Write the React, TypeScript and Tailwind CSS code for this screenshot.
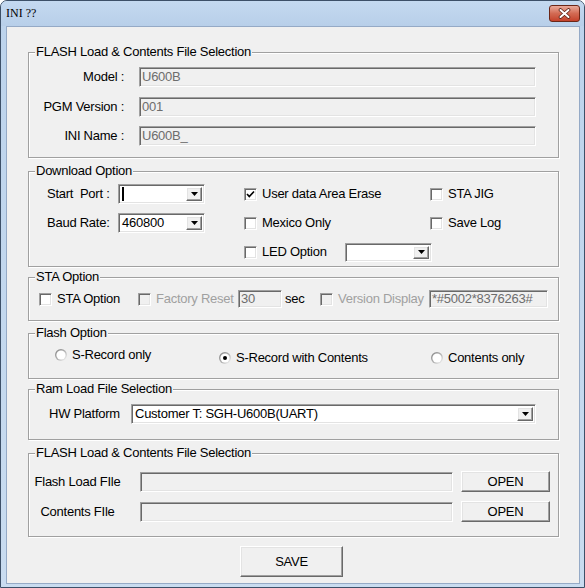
import React from 'react';

const sunken =
  'border border-t-[#a0a0a0] border-l-[#a0a0a0] border-b-white border-r-white shadow-[inset_1px_1px_0_#696969,inset_-1px_-1px_0_#e3e3e3]';
const raised =
  'border border-t-white border-l-white border-b-[#696969] border-r-[#696969] shadow-[inset_-1px_-1px_0_#a0a0a0,inset_1px_1px_0_#e3e3e3]';

const Group: React.FC<{ title: string; className?: string; children?: React.ReactNode }> = ({
  title,
  className = '',
  children,
}) => (
  <div
    className={`relative border border-[#a0a0a0] shadow-[inset_1px_1px_0_#fff,1px_1px_0_#fff] ${className}`}
  >
    <span className="absolute top-[-8px] left-[6px] px-[1px] bg-[#f0f0f0] leading-[14px] whitespace-nowrap">
      {title}
    </span>
    {children}
  </div>
);

const TextBox: React.FC<{ value?: string; className?: string }> = ({ value = '', className = '' }) => (
  <div className={`${sunken} bg-[#f0f0f0] flex items-center pl-[2px] text-[#6d6d6d] whitespace-nowrap overflow-hidden ${className}`}>
    {value}
  </div>
);

const DropButton = () => (
  <div className={`${raised} w-[16px] h-full bg-[#f0f0f0] flex items-center justify-center`}>
    <svg width="7" height="4" viewBox="0 0 7 4">
      <polygon points="0,0 7,0 3.5,4" fill="#000" />
    </svg>
  </div>
);

const Combo: React.FC<{ value?: string; caret?: boolean; className?: string }> = ({
  value = '',
  caret = false,
  className = '',
}) => (
  <div className={`${sunken} bg-white p-[2px] flex items-stretch ${className}`}>
    <div className="flex-1 flex items-center pl-[1px] whitespace-nowrap overflow-hidden">
      {caret && <div className="w-[2px] h-[14px] bg-black" />}
      {value}
    </div>
    <DropButton />
  </div>
);

const Checkbox: React.FC<{ checked?: boolean; disabled?: boolean }> = ({ checked, disabled }) => (
  <div
    className={`${sunken} w-[13px] h-[13px] shrink-0 flex items-center justify-center ${
      disabled ? 'bg-[#f0f0f0]' : 'bg-white'
    }`}
  >
    {checked && (
      <svg width="11" height="11" viewBox="0 0 11 11">
        <path d="M2 5 L4.3 7.5 L9 2.5" stroke="#000" strokeWidth="1.7" fill="none" />
      </svg>
    )}
  </div>
);

const Check: React.FC<{ label: string; checked?: boolean; disabled?: boolean; className?: string }> = ({
  label,
  checked,
  disabled,
  className = '',
}) => (
  <div className={`flex items-center ${className}`}>
    <Checkbox checked={checked} disabled={disabled} />
    <span className={`ml-[5px] whitespace-nowrap ${disabled ? 'text-[#a0a0a0]' : ''}`}>{label}</span>
  </div>
);

const Radio: React.FC<{ label: string; checked?: boolean; className?: string }> = ({
  label,
  checked,
  className = '',
}) => (
  <div className={`flex items-center h-[14px] ${className}`}>
    <svg width="12" height="12" viewBox="0 0 12 12" className="shrink-0">
      <defs>
        <linearGradient id="rg" x1="0" y1="0" x2="1" y2="1">
          <stop offset="0" stopColor="#808080" />
          <stop offset="0.5" stopColor="#b0b0b0" />
          <stop offset="1" stopColor="#ffffff" />
        </linearGradient>
      </defs>
      <circle cx="6" cy="6" r="6" fill="url(#rg)" />
      <circle cx="6" cy="6" r="4.6" fill="#fff" />
      {checked && <circle cx="6" cy="6" r="2" fill="#000" />}
    </svg>
    <span className="ml-[5px] whitespace-nowrap">{label}</span>
  </div>
);

const Button: React.FC<{ label: string; className?: string }> = ({ label, className = '' }) => (
  <div className={`${raised} bg-[#f0f0f0] flex items-center justify-center ${className}`}>{label}</div>
);

export default function App() {
  return (
    <div className="w-[585px] h-[588px] flex flex-col rounded-t-[7px] border border-[#3d5068] bg-gradient-to-b from-[#bcd3ec] to-[#c9dcf0] overflow-hidden font-['Liberation_Sans',Arial,sans-serif] text-[13px] tracking-[-0.25px] text-black">
      {/* title bar */}
      <div className="h-[25px] shrink-0 flex items-start justify-between bg-gradient-to-b from-[#c4d9f0] to-[#b8cfe9]">
        <span className="pl-[5px] pt-[5px] font-['Liberation_Serif',serif] text-[12px] tracking-normal leading-[14px]">
          INI ??
        </span>
        <div className="mt-[4px] mr-[4px] w-[31px] h-[17px] rounded-[3px] border border-[#6b2617] bg-gradient-to-b from-[#e9a99a] via-[#d26a53] to-[#c4412a] flex items-center justify-center">
          <svg width="13" height="11" viewBox="0 0 13 11">
            <path d="M2.5 2 L10.5 9 M10.5 2 L2.5 9" stroke="#5a2318" strokeWidth="3.6" strokeLinecap="round" />
            <path d="M2.5 2 L10.5 9 M10.5 2 L2.5 9" stroke="#fff" strokeWidth="2" strokeLinecap="round" />
          </svg>
        </div>
      </div>

      {/* client area */}
      <div className="ml-[5px] mr-[4px] h-[558px] border border-[#95aac6] bg-[#f0f0f0] pl-[21px] pr-[20px] pt-[25px]">
        <Group title="FLASH Load & Contents File Selection" className="h-[106px]">
          <div className="pt-[14px]">
            <div className="flex items-center h-[20px]">
              <div className="w-[95px] text-right">Model :</div>
              <TextBox value="U600B" className="ml-[15px] w-[397px] h-[20px]" />
            </div>
            <div className="flex items-center h-[20px] mt-[10px]">
              <div className="w-[95px] text-right">PGM Version :</div>
              <TextBox value="001" className="ml-[15px] w-[397px] h-[20px]" />
            </div>
            <div className="flex items-center h-[20px] mt-[9px]">
              <div className="w-[95px] text-right">INI Name :</div>
              <TextBox value="U600B_" className="ml-[15px] w-[397px] h-[20px]" />
            </div>
          </div>
        </Group>

        <Group title="Download Option" className="h-[96px] mt-[13px]">
          <div className="pt-[12px] pl-[18px]">
            <div className="flex items-center h-[20px]">
              <div className="w-[197px] flex items-center">
                <div className="w-[71px] whitespace-pre">Start  Port :</div>
                <Combo caret className="w-[87px] h-[20px]" />
              </div>
              <Check label="User data Area Erase" checked className="w-[186px]" />
              <Check label="STA JIG" />
            </div>
            <div className="flex items-center h-[20px] mt-[9px]">
              <div className="w-[197px] flex items-center">
                <div className="w-[71px]">Baud Rate:</div>
                <Combo value="460800" className="w-[87px] h-[20px]" />
              </div>
              <Check label="Mexico Only" className="w-[186px]" />
              <Check label="Save Log" />
            </div>
            <div className="flex items-center h-[20px] mt-[9px]">
              <div className="w-[197px]" />
              <Check label="LED Option" className="w-[101px]" />
              <Combo className="w-[87px] h-[19px]" />
            </div>
          </div>
        </Group>

        <Group title="STA Option" className="h-[44px] mt-[10px]">
          <div className="pt-[12px] pl-[10px] flex items-center h-[30px]">
            <Check label="STA Option" className="w-[99px]" />
            <Check label="Factory Reset" disabled className="w-[100px]" />
            <TextBox value="30" className="w-[44px] h-[18px]" />
            <span className="ml-[2px] w-[36px] pl-[1px]">sec</span>
            <Check label="Version Display" disabled className="w-[109px]" />
            <TextBox value="*#5002*8376263#" className="w-[119px] h-[18px]" />
          </div>
        </Group>

        <Group title="Flash Option" className="h-[46px] mt-[12px]">
          <div className="pt-[14px] pl-[26px] flex items-start">
            <Radio label="S-Record only" className="w-[164px]" />
            <Radio label="S-Record with Contents" checked className="w-[212px] mt-[3px]" />
            <Radio label="Contents only" className="mt-[3px]" />
          </div>
        </Group>

        <Group title="Ram Load File Selection" className="h-[51px] mt-[10px]">
          <div className="pt-[14px] pl-[20px] flex items-center">
            <div className="w-[82px]">HW Platform</div>
            <Combo value="Customer T: SGH-U600B(UART)" className="w-[405px] h-[20px]" />
          </div>
        </Group>

        <Group title="FLASH Load & Contents File Selection" className="h-[84px] mt-[13px]">
          <div className="pt-[17px]">
            <div className="flex items-center h-[21px]">
              <div className="w-[97px] text-center">Flash Load FIle</div>
              <TextBox className="ml-[14px] w-[313px] h-[20px]" />
              <Button label="OPEN" className="ml-[8px] w-[89px] h-[21px]" />
            </div>
            <div className="flex items-center h-[21px] mt-[9px]">
              <div className="w-[97px] text-center">Contents FIle</div>
              <TextBox className="ml-[14px] w-[313px] h-[20px]" />
              <Button label="OPEN" className="ml-[8px] w-[89px] h-[21px]" />
            </div>
          </div>
        </Group>

        <Button label="SAVE" className="mt-[9px] ml-[212px] w-[103px] h-[31px]" />
      </div>
    </div>
  );
}
